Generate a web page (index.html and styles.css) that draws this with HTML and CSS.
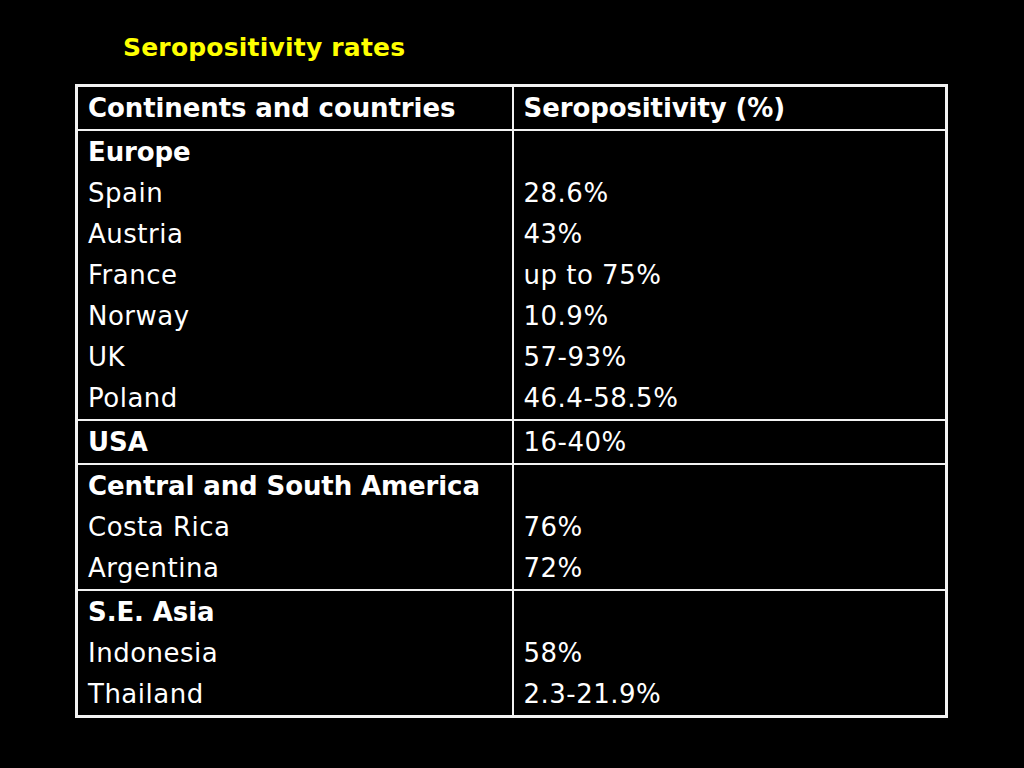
FILE: index.html
```html
<!DOCTYPE html>
<html>
<head>
<meta charset="utf-8">
<link rel="stylesheet" href="styles.css">
</head>
<body>
<div class="slide">
  <h1 class="title">Seropositivity rates</h1>
  <table class="rates">
    <colgroup><col class="c1"><col class="c2"></colgroup>
    <tr class="head">
      <td><div class="l"><b>Continents and countries</b></div></td>
      <td><div class="l"><b>Seropositivity (%)</b></div></td>
    </tr>
    <tr>
      <td><div class="l"><b>Europe</b></div><div class="l">Spain</div><div class="l">Austria</div><div class="l">France</div><div class="l">Norway</div><div class="l">UK</div><div class="l">Poland</div></td>
      <td><div class="l">&nbsp;</div><div class="l">28.6%</div><div class="l">43%</div><div class="l">up to 75%</div><div class="l">10.9%</div><div class="l">57-93%</div><div class="l">46.4-58.5%</div></td>
    </tr>
    <tr>
      <td><div class="l"><b>USA</b></div></td>
      <td><div class="l">16-40%</div></td>
    </tr>
    <tr>
      <td><div class="l"><b>Central and South America</b></div><div class="l">Costa Rica</div><div class="l">Argentina</div></td>
      <td><div class="l">&nbsp;</div><div class="l">76%</div><div class="l">72%</div></td>
    </tr>
    <tr>
      <td><div class="l"><b>S.E. Asia</b></div><div class="l">Indonesia</div><div class="l">Thailand</div></td>
      <td><div class="l">&nbsp;</div><div class="l">58%</div><div class="l">2.3-21.9%</div></td>
    </tr>
  </table>
</div>
</body>
</html>
```

FILE: styles.css
```css
html, body {
  margin: 0;
  padding: 0;
  background: #000;
}
.slide {
  width: 1024px;
  height: 768px;
  background: #000;
  color: #fff;
  font-family: "DejaVu Sans", Verdana, sans-serif;
  font-size: 26px;
  letter-spacing: 0.5px;
  padding-top: 30px;
  box-sizing: border-box;
}
.title {
  margin: 0 0 18px 123px;
  font-size: 25px;
  letter-spacing: 0.2px;
  font-weight: bold;
  color: #ffff00;
  line-height: 36px;
}
.rates {
  margin-left: 75px;
  width: 873px;
  border-collapse: collapse;
  border: 3px solid #f2f2f2;
}
.c1 { width: 436px; }
.rates td {
  border: 2px solid #f2f2f2;
  vertical-align: top;
  padding: 1px 10px 0 10px;
  line-height: 41px;
}
.l {
  height: 41px;
  white-space: nowrap;
}
b {
  font-weight: bold;
  letter-spacing: -0.1px;
}
```
